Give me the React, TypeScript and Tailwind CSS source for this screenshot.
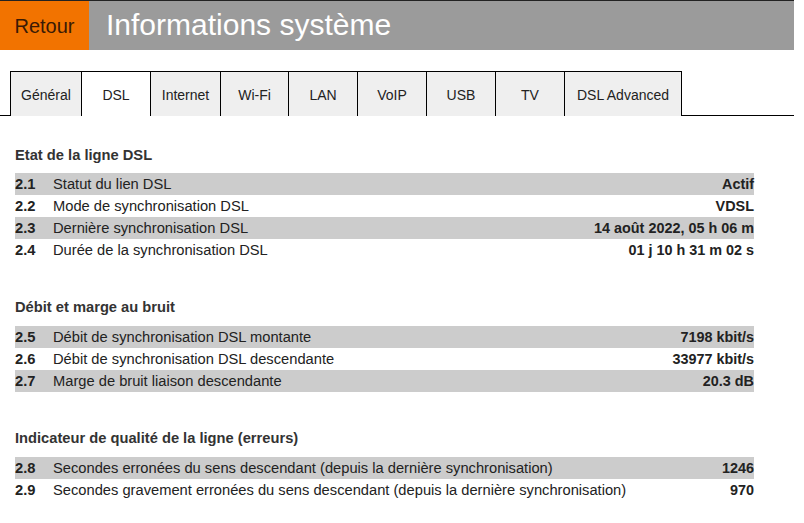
const TABS = [
  { label: 'Général', w: 'w-[71px]' },
  { label: 'DSL', w: 'w-[69px]', active: true },
  { label: 'Internet', w: 'w-[70px]' },
  { label: 'Wi-Fi', w: 'w-[68px]' },
  { label: 'LAN', w: 'w-[69px]' },
  { label: 'VoIP', w: 'w-[69px]' },
  { label: 'USB', w: 'w-[69px]' },
  { label: 'TV', w: 'w-[69px]' },
  { label: 'DSL Advanced', w: 'w-[118px]' },
]

const SECTIONS = [
  {
    title: 'Etat de la ligne DSL',
    rows: [
      ['2.1', 'Statut du lien DSL', 'Actif'],
      ['2.2', 'Mode de synchronisation DSL', 'VDSL'],
      ['2.3', 'Dernière synchronisation DSL', '14 août 2022, 05 h 06 m'],
      ['2.4', 'Durée de la synchronisation DSL', '01 j 10 h 31 m 02 s'],
    ],
  },
  {
    title: 'Débit et marge au bruit',
    rows: [
      ['2.5', 'Débit de synchronisation DSL montante', '7198 kbit/s'],
      ['2.6', 'Débit de synchronisation DSL descendante', '33977 kbit/s'],
      ['2.7', 'Marge de bruit liaison descendante', '20.3 dB'],
    ],
  },
  {
    title: 'Indicateur de qualité de la ligne (erreurs)',
    rows: [
      ['2.8', 'Secondes erronées du sens descendant (depuis la dernière synchronisation)', '1246'],
      ['2.9', 'Secondes gravement erronées du sens descendant (depuis la dernière synchronisation)', '970'],
    ],
  },
]

export default function App() {
  return (
    <div className="w-[804px] h-[523px] bg-white overflow-hidden font-['Liberation_Sans',Arial,sans-serif] text-[#222]">
      <div className="flex h-[50px] w-[794px] border-t border-[#222]">
        <div className="w-[89px] bg-[#f27300] text-[#3a1a05] text-[20px] flex items-center justify-center">Retour</div>
        <div className="flex-1 bg-[#9b9b9b] text-white text-[30px] flex items-center pl-[17px] pb-[2px]">Informations système</div>
      </div>

      <div className="flex items-end w-[794px] mt-[21px] text-[14px]">
        <div className="w-[10px] border-b border-black" />
        {TABS.map((t, i) => (
          <div
            key={t.label}
            className={`${t.w} h-[45px] flex items-center justify-center pt-[3px] border-t border-l border-black ${i === TABS.length - 1 ? 'border-r' : ''} ${t.active ? 'bg-white' : 'bg-[#efefef]'}`}
          >
            {t.label}
          </div>
        ))}
        <div className="flex-1 border-b border-black" />
      </div>

      <div className="px-[15px] w-[769px]">
        {SECTIONS.map((s, si) => (
          <div key={s.title} className={si === 0 ? 'mt-[29px]' : 'mt-[36px]'}>
            <div className={`font-bold text-[14.7px] leading-[20px] text-[#333] ${si === 0 ? 'mb-[8px]' : 'mb-[9px]'}`}>{s.title}</div>
            {s.rows.map((r, ri) => (
              <div key={r[0]} className={`flex items-center h-[22px] pt-[1px] text-[14.7px] ${ri % 2 === 0 ? 'bg-[#cccccc]' : ''}`}>
                <span className="w-[38px] font-bold">{r[0]}</span>
                <span className="flex-1">{r[1]}</span>
                <span className="font-bold text-[14.4px]">{r[2]}</span>
              </div>
            ))}
          </div>
        ))}
      </div>
    </div>
  )
}
